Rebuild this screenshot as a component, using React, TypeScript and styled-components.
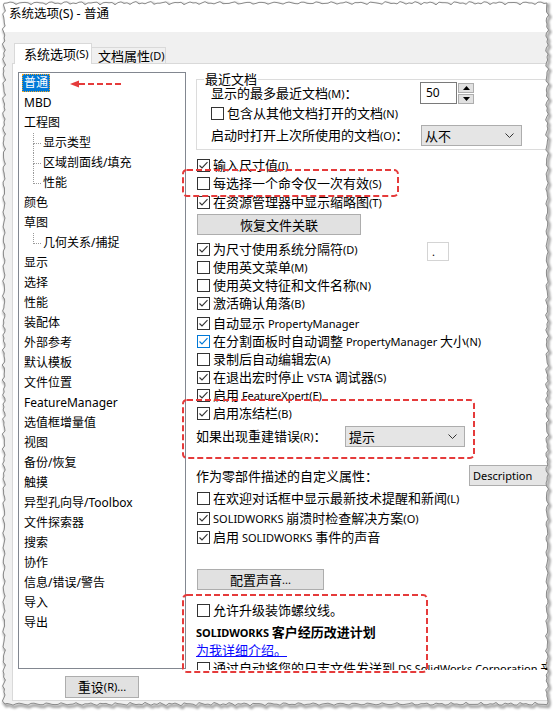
import React from "react";
import styled, { createGlobalStyle } from "styled-components";

const GlobalStyle = createGlobalStyle`
  html, body { margin: 0; padding: 0; background: #ffffff; }
  body { font-family: "Noto Sans", "Noto Sans CJK SC", sans-serif; color: #000; }
  * { box-sizing: border-box; }
`;

const Frame = styled.div`
  position: relative;
  width: 553px;
  height: 712px;
  overflow: hidden;
  background: #fff;
`;

const Dialog = styled.div`
  width: 590px;
  height: 712px;
  display: flex;
  flex-direction: column;
  background: #f0f0f0;
`;

const TitleBar = styled.div`
  flex: none;
  height: 32px;
  padding: 6px 0 0 9px;
  background: #fff;
  font-size: 12.5px;
  line-height: 16px;
  white-space: nowrap;
`;

const Body = styled.div`
  flex: 1;
  display: flex;
  flex-direction: column;
  padding-left: 12px;
`;

const TabStrip = styled.div`
  flex: none;
  height: 31px;
  display: flex;
  align-items: flex-end;
  padding-left: 2px;
  position: relative;
  z-index: 1;
`;

const Tab = styled.div<{ $active?: boolean; $w: number }>`
  display: flex;
  align-items: center;
  width: ${p => p.$w}px;
  height: ${p => (p.$active ? 21 : 16)}px;
  margin-bottom: ${p => (p.$active ? -1 : 0)}px;
  padding-left: ${p => (p.$active ? 9 : 6)}px;
  border: 1px solid #d9d9d9;
  border-bottom: none;
  border-left: ${p => (p.$active ? "1px solid #d9d9d9" : "none")};
  background: ${p => (p.$active ? "#fff" : "#f0f0f0")};
  font-size: 13px;
  line-height: 16px;
  white-space: nowrap;
`;

const Page = styled.div`
  flex: none;
  height: 638px;
  display: flex;
  align-items: flex-start;
  gap: 10px;
  padding: 8px 0 0 5px;
  background: #fff;
  border: 1px solid #d9d9d9;
`;

const LeftCol = styled.div`
  flex: none;
  width: 168px;
  display: flex;
  flex-direction: column;
  align-items: center;
  gap: 7px;
`;

const Tree = styled.div`
  width: 168px;
  height: 597px;
  border: 1px solid #828790;
  background: #fff;
  display: flex;
  flex-direction: column;
`;

const TreeItem = styled.div<{ $child?: boolean }>`
  flex: none;
  height: 20px;
  display: flex;
  align-items: center;
  padding-left: ${p => (p.$child ? 14 : 3)}px;
  font-size: 12px;
  line-height: 18px;
  white-space: nowrap;
`;

const Connector = styled.span<{ $last?: boolean }>`
  flex: none;
  align-self: stretch;
  width: 8px;
  display: flex;
  flex-direction: column;
  &::before {
    content: "";
    height: 10px;
    border-left: 1px dotted #9a9a9a;
    border-bottom: 1px dotted #9a9a9a;
  }
  &::after {
    content: "";
    flex: 1;
    border-left: ${p => (p.$last ? "none" : "1px dotted #9a9a9a")};
  }
`;

const ItemLabel = styled.span<{ $selected?: boolean }>`
  height: 18px;
  padding: 0 2px;
  line-height: 18px;
  color: ${p => (p.$selected ? "#fff" : "#000")};
  background: ${p => (p.$selected ? "#0078d7" : "transparent")};
  outline: ${p => (p.$selected ? "1px dotted #f5a623" : "none")};
  outline-offset: -1px;
`;

const RightCol = styled.div`
  flex: 1;
  min-width: 0;
  height: 598px;
  overflow: hidden;
  display: flex;
  flex-direction: column;
  padding-top: 7px;
  font-size: 13px;
`;

const GroupBox = styled.div`
  position: relative;
  flex: none;
  border: 1px solid #dcdcdc;
  padding: 2px 0 3px 14px;
  display: flex;
  flex-direction: column;
`;

const Legend = styled.div`
  position: absolute;
  top: -8px;
  left: 7px;
  padding: 0 1px;
  background: #fff;
  font-size: 13px;
  line-height: 14px;
`;

const Row = styled.div<{ $h?: number; $mt?: number; $pl?: number }>`
  flex: none;
  display: flex;
  align-items: center;
  height: ${p => p.$h ?? 18}px;
  margin-top: ${p => p.$mt ?? 0}px;
  padding-left: ${p => p.$pl ?? 0}px;
  font-size: 13px;
  line-height: 18px;
  white-space: nowrap;
`;

const Cell = styled.div<{ $w?: number }>`
  flex: none;
  width: ${p => (p.$w ? `${p.$w}px` : "auto")};
  white-space: nowrap;
`;

const Box = styled.span<{ $blue?: boolean }>`
  flex: none;
  width: 13px;
  height: 13px;
  margin-right: 3px;
  border: 1px solid ${p => (p.$blue ? "#0078d7" : "#333")};
  background: #fff;
  display: flex;
  align-items: center;
  justify-content: center;
`;

const Lat = styled.span`
  font-size: 11px;
`;

const Bold = styled.div`
  font-weight: 700;
`;

const Link = styled.span`
  color: #0b0bff;
  text-decoration: underline;
`;

const Button = styled.div<{ $w: number; $h?: number; $mt?: number }>`
  flex: none;
  width: ${p => p.$w}px;
  height: ${p => p.$h ?? 21}px;
  margin-top: ${p => p.$mt ?? 0}px;
  margin-left: ${p => (p.$mt !== undefined ? 1 : 0)}px;
  border: 1px solid #adadad;
  background: #e1e1e1;
  display: flex;
  align-items: center;
  justify-content: center;
  font-size: 13px;
  line-height: 18px;
  white-space: nowrap;
`;

const Combo = styled.div<{ $w: number }>`
  flex: none;
  width: ${p => p.$w}px;
  height: 21px;
  border: 1px solid #adadad;
  background: #e5e5e5;
  display: flex;
  align-items: center;
  justify-content: space-between;
  padding: 0 7px 0 3px;
  font-size: 13px;
`;

const SpinWrap = styled.div`
  flex: none;
  display: flex;
  gap: 1px;
  height: 22px;
`;

const SpinInput = styled.div`
  width: 37px;
  height: 22px;
  border: 1px solid #7a7a7a;
  padding-left: 5px;
  display: flex;
  align-items: center;
  font-size: 12px;
  background: #fff;
`;

const SpinButtons = styled.div`
  width: 16px;
  display: flex;
  flex-direction: column;
  gap: 1px;
  padding-top: 1px;
`;

const SpinBtn = styled.div`
  flex: 1;
  border: 1px solid #adadad;
  background: #e1e1e1;
  display: flex;
  align-items: center;
  justify-content: center;
`;

const DotBox = styled.div`
  flex: none;
  align-self: flex-start;
  margin-top: 2px;
  width: 22px;
  height: 19px;
  border: 1px solid #d4d4d4;
  padding-left: 4px;
  font-size: 11px;
  line-height: 17px;
`;

const Overlay = styled.svg`
  position: absolute;
  left: 0;
  top: 0;
  width: 553px;
  height: 712px;
  pointer-events: none;
`;

function Txt({ t }: { t: string }) {
  const parts = t.split(/([\u0020-\u007e]+)/);
  return (
    <>
      {parts.map((p, i) =>
        !p ? null : /^[\u0020-\u007e]+$/.test(p) ? <Lat key={i}>{p}</Lat> : <React.Fragment key={i}>{p}</React.Fragment>
      )}
    </>
  );
}

function Check({ checked, blue }: { checked?: boolean; blue?: boolean }) {
  return (
    <Box $blue={blue}>
      {checked && (
        <svg width="11" height="11" viewBox="0 0 11 11">
          <polyline points="1.5,5.5 4,8 9.5,2.2" fill="none" stroke={blue ? "#0078d7" : "#333"} strokeWidth="1.1" />
        </svg>
      )}
    </Box>
  );
}

function CheckRow({
  label,
  checked,
  blue,
  mt,
  pl = 1,
  labelW,
  children,
}: {
  label: string;
  checked?: boolean;
  blue?: boolean;
  mt?: number;
  pl?: number;
  labelW?: number;
  children?: React.ReactNode;
}) {
  return (
    <Row $mt={mt} $pl={pl}>
      <Check checked={checked} blue={blue} />
      <Cell $w={labelW}>
        <Txt t={label} />
      </Cell>
      {children}
    </Row>
  );
}

function Chevron() {
  return (
    <svg width="9" height="5" viewBox="0 0 9 5">
      <polyline points="0.5,0.5 4.5,4.5 8.5,0.5" fill="none" stroke="#333" strokeWidth="1" />
    </svg>
  );
}

function Spin() {
  return (
    <SpinWrap>
      <SpinInput>50</SpinInput>
      <SpinButtons>
        <SpinBtn>
          <svg width="7" height="4" viewBox="0 0 7 4">
            <polygon points="0,4 3.5,0 7,4" fill="#000" />
          </svg>
        </SpinBtn>
        <SpinBtn>
          <svg width="7" height="4" viewBox="0 0 7 4">
            <polygon points="0,0 3.5,4 7,0" fill="#000" />
          </svg>
        </SpinBtn>
      </SpinButtons>
    </SpinWrap>
  );
}

type Item = { label: string; child?: boolean; last?: boolean; selected?: boolean };
const items: Item[] = [
  { label: "普通", selected: true },
  { label: "MBD" },
  { label: "工程图" },
  { label: "显示类型", child: true },
  { label: "区域剖面线/填充", child: true },
  { label: "性能", child: true, last: true },
  { label: "颜色" },
  { label: "草图" },
  { label: "几何关系/捕捉", child: true, last: true },
  { label: "显示" },
  { label: "选择" },
  { label: "性能" },
  { label: "装配体" },
  { label: "外部参考" },
  { label: "默认模板" },
  { label: "文件位置" },
  { label: "FeatureManager" },
  { label: "选值框增量值" },
  { label: "视图" },
  { label: "备份/恢复" },
  { label: "触摸" },
  { label: "异型孔向导/Toolbox" },
  { label: "文件探索器" },
  { label: "搜索" },
  { label: "协作" },
  { label: "信息/错误/警告" },
  { label: "导入" },
  { label: "导出" },
];

function tornPath(): string {
  const L = 4,
    T = 3,
    R = 547,
    B = 704,
    step = 3;
  const w = (t: number, s: number) =>
    0.9 * Math.sin(t * 0.45 + s) + 0.6 * Math.sin(t * 1.27 + s * 1.7) + 0.35 * Math.sin(t * 2.9 + s * 2.3);
  const pts: string[] = [];
  for (let x = L; x < R; x += step) pts.push(`${x.toFixed(1)},${(T + w(x, 0.3)).toFixed(1)}`);
  for (let y = T; y < B; y += step) pts.push(`${(R + w(y, 1.1)).toFixed(1)},${y.toFixed(1)}`);
  for (let x = R; x > L; x -= step) pts.push(`${x.toFixed(1)},${(B + w(x, 2.2)).toFixed(1)}`);
  for (let y = B; y > T; y -= step) pts.push(`${(L + w(y, 3.7)).toFixed(1)},${y.toFixed(1)}`);
  return `M${pts.join("L")}Z`;
}

const RED = "#e53b3b";

export default function App() {
  const inner = tornPath();
  const outer = "M-5,-5H560V720H-5Z";
  return (
    <Frame>
      <GlobalStyle />
      <Dialog>
        <TitleBar>系统选项(S) - 普通</TitleBar>
        <Body>
          <TabStrip>
            <Tab $active $w={78}>
              <Txt t="系统选项(S)" />
            </Tab>
            <Tab $w={74}>
              <Txt t="文档属性(D)" />
            </Tab>
          </TabStrip>
          <Page>
            <LeftCol>
              <Tree>
                {items.map((it, i) => (
                  <TreeItem key={i} $child={it.child}>
                    {it.child && <Connector $last={it.last} />}
                    <ItemLabel $selected={it.selected}>{it.label}</ItemLabel>
                  </TreeItem>
                ))}
              </Tree>
              <Button $w={74} $h={22}>
                <Txt t="重设(R)..." />
              </Button>
            </LeftCol>
            <RightCol>
              <GroupBox>
                <Legend>最近文档</Legend>
                <Row $h={22}>
                  <Cell $w={209}>
                    <Txt t="显示的最多最近文档(M)：" />
                  </Cell>
                  <Spin />
                </Row>
                <CheckRow label="包含从其他文档打开的文档(N)" pl={0} />
                <Row $h={21} $mt={3}>
                  <Cell $w={210}>
                    <Txt t="启动时打开上次所使用的文档(O)：" />
                  </Cell>
                  <Combo $w={101}>
                    从不
                    <Chevron />
                  </Combo>
                </Row>
              </GroupBox>
              <CheckRow mt={6} checked label="输入尺寸值(I)" />
              <CheckRow label="每选择一个命令仅一次有效(S)" />
              <CheckRow mt={1} checked label="在资源管理器中显示缩略图(T)" />
              <Button $w={164} $mt={3}>
                恢复文件关联
              </Button>
              <CheckRow mt={5} checked label="为尺寸使用系统分隔符(D)" labelW={214}>
                <DotBox>.</DotBox>
              </CheckRow>
              <CheckRow label="使用英文菜单(M)" />
              <CheckRow label="使用英文特征和文件名称(N)" />
              <CheckRow checked label="激活确认角落(B)" />
              <CheckRow mt={2} checked label="自动显示 PropertyManager" />
              <CheckRow checked blue label="在分割面板时自动调整 PropertyManager 大小(N)" />
              <CheckRow label="录制后自动编辑宏(A)" />
              <CheckRow checked label="在退出宏时停止 VSTA 调试器(S)" />
              <CheckRow checked label="启用 FeatureXpert(E)" />
              <CheckRow checked label="启用冻结栏(B)" />
              <Row $h={21} $mt={4}>
                <Cell $w={149}>
                  <Txt t="如果出现重建错误(R)：" />
                </Cell>
                <Combo $w={120}>
                  提示
                  <Chevron />
                </Combo>
              </Row>
              <Row $h={21} $mt={18}>
                <Cell $w={273}>
                  <Txt t="作为零部件描述的自定义属性：" />
                </Cell>
                <Combo $w={112}>
                  <Txt t="Description" />
                  <Chevron />
                </Combo>
              </Row>
              <CheckRow mt={3} label="在欢迎对话框中显示最新技术提醒和新闻(L)" />
              <CheckRow mt={2} checked label="SOLIDWORKS 崩溃时检查解决方案(O)" />
              <CheckRow mt={1} checked label="启用 SOLIDWORKS 事件的声音" />
              <Button $w={127} $mt={23}>
                <Txt t="配置声音..." />
              </Button>
              <CheckRow mt={11} label="允许升级装饰螺纹线。" />
              <Row $mt={4}>
                <Bold>
                  <Txt t="SOLIDWORKS 客户经历改进计划" />
                </Bold>
              </Row>
              <Row>
                <Link>为我详细介绍。</Link>
              </Row>
              <CheckRow label="通过自动将您的日志文件发送到 DS SolidWorks Corporation 来帮助改进产品" />
            </RightCol>
          </Page>
        </Body>
      </Dialog>
      <Overlay viewBox="0 0 553 712">
        <defs>
          <clipPath id="outside">
            <path d={outer + inner} clipRule="evenodd" />
          </clipPath>
          <filter id="soft" x="-5%" y="-5%" width="110%" height="110%">
            <feGaussianBlur stdDeviation="1.2" />
          </filter>
        </defs>
        <rect x="183" y="170" width="215" height="26" rx="4" fill="none" stroke={RED} strokeWidth="2" strokeDasharray="6 3" />
        <rect x="183" y="400" width="291" height="58" rx="4" fill="none" stroke={RED} strokeWidth="2" strokeDasharray="6 3" />
        <rect x="183" y="595" width="244" height="77" rx="4" fill="none" stroke={RED} strokeWidth="2" strokeDasharray="6 3" />
        <line x1="79" y1="84" x2="124" y2="84" stroke={RED} strokeWidth="2" strokeDasharray="6 3" />
        <polygon points="70,84 79,80.5 79,87.5" fill={RED} />
        <path d={outer + inner} fill="#fff" fillRule="evenodd" />
        <g clipPath="url(#outside)">
          <path d={inner} fill="none" stroke="#000" strokeOpacity="0.35" strokeWidth="3" transform="translate(1.5,2)" filter="url(#soft)" />
        </g>
        <path d={inner} fill="none" stroke="#8a8a8a" strokeWidth="1" />
      </Overlay>
    </Frame>
  );
}
